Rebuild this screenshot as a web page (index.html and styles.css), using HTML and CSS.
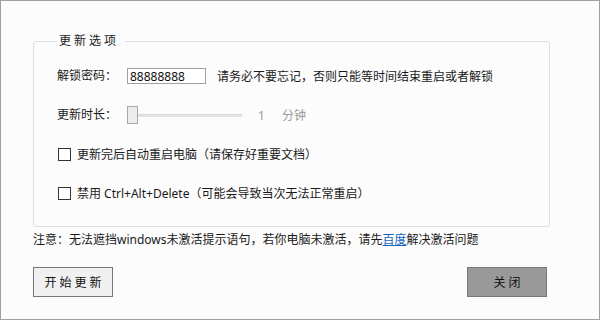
FILE: index.html
```html
<!DOCTYPE html>
<html lang="zh-CN">
<head>
  <meta charset="UTF-8">
  <title>更新选项</title>
  <link rel="stylesheet" href="styles.css">
</head>
<body>
  <div class="window">
    <fieldset class="options">
      <legend>更新选项</legend>

      <div class="row">
        <label class="field-label" for="unlockCode">解锁密码：</label>
        <input type="text" id="unlockCode" class="code-input" value="88888888">
        <span class="hint">请务必不要忘记，否则只能等时间结束重启或者解锁</span>
      </div>

      <div class="row">
        <span class="field-label">更新时长：</span>
        <div class="slider">
          <div class="slider-thumb"></div>
          <div class="slider-track"></div>
        </div>
        <span class="slider-value">1</span>
        <span class="slider-unit">分钟</span>
      </div>

      <div class="row check-row">
        <span class="checkbox"></span>
        <span>更新完后自动重启电脑（请保存好重要文档）</span>
      </div>

      <div class="row check-row">
        <span class="checkbox"></span>
        <span>禁用 Ctrl+Alt+Delete（可能会导致当次无法正常重启）</span>
      </div>
    </fieldset>

    <div class="notice">注意：无法遮挡windows未激活提示语句，若你电脑未激活，请先<a href="#">百度</a>解决激活问题</div>

    <div class="actions">
      <button class="btn btn-start">开始更新</button>
      <button class="btn btn-close">关闭</button>
    </div>
  </div>
</body>
</html>
```

FILE: styles.css
```css
* {
  box-sizing: border-box;
}

body {
  margin: 0;
  font-family: "Noto Sans", "Noto Sans CJK SC", sans-serif;
  font-size: 12px;
  color: #1a1a1a;
}

.window {
  width: 600px;
  height: 320px;
  border: 1px solid #a0a0a0;
  background-color: #fcfcfc;
  padding: 32px 52px 0 32px;
}

.options {
  margin: 0;
  border: 1px solid #d5dfe6;
  border-radius: 3px;
  padding: 17px 10px 23px 23px;
  width: 517px;
}

.options legend {
  padding: 0 6px 0 2px;
  margin-left: 0;
  line-height: 16px;
  letter-spacing: 3px;
}

.row {
  display: flex;
  align-items: center;
  height: 20px;
  margin-bottom: 19px;
}

.row:last-child {
  margin-bottom: 0;
}

.field-label {
  width: 70px;
  line-height: 16px;
}

.code-input {
  width: 79px;
  height: 16px;
  border: 1px solid #a0a0a0;
  background-color: white;
  padding: 0 2px;
  font-family: inherit;
  font-size: 12px;
  color: #111;
  outline: none;
}

.hint {
  margin-left: 11px;
}

.slider {
  display: flex;
  align-items: center;
  width: 115px;
}

.slider-thumb {
  width: 11px;
  height: 18px;
  border: 1px solid #a8a8a8;
  background-color: #ececec;
}

.slider-track {
  flex: 1;
  height: 3px;
  background-color: #e4e4e4;
  border-top: 1px solid #dadada;
}

.slider-value {
  margin-left: 16px;
  color: #9a9a9a;
}

.slider-unit {
  margin-left: 17px;
  color: #9a9a9a;
}

.check-row {
  padding-left: 1px;
}

.checkbox {
  width: 13px;
  height: 13px;
  border: 1px solid #333;
  background-color: white;
  margin-right: 6px;
}

.notice {
  margin-top: 5px;
  line-height: 16px;
}

.notice a {
  color: #1565c0;
  text-decoration: underline;
}

.actions {
  display: flex;
  justify-content: space-between;
  margin-top: 19px;
  width: 514px;
}

.btn {
  width: 80px;
  height: 30px;
  border: 1px solid #777;
  font-family: inherit;
  font-size: 12px;
  color: #111;
  letter-spacing: 3px;
  padding: 0 0 0 3px;
}

.btn-start {
  background-color: #f0f0f0;
}

.btn-close {
  background-color: #999;
}
```
